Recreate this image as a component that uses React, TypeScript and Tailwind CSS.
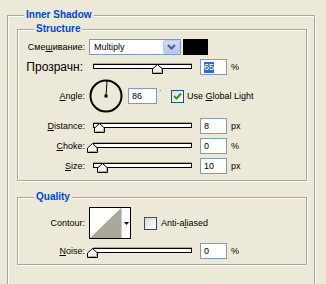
import type { ReactNode } from 'react';

// etched XP group box line: gray outer, white highlight
const ETCH = 'border border-[#aca899] shadow-[inset_1px_1px_0_#fff,1px_1px_0_#fff]';

function Legend({ children }: { children: ReactNode }) {
  return (
    <span className="absolute -top-[7px] left-[16px] px-[2px] bg-[#ece9d8] text-[10px] leading-[12px] font-bold text-[#0046d5]">
      {children}
    </span>
  );
}

function Thumb({ left }: { left: number }) {
  return (
    <svg className="absolute top-[5px]" style={{ left }} width="11" height="10" viewBox="0 0 11 10">
      <path d="M5.5 0.5 L10.5 5 V9.5 H0.5 V5 Z" fill="#f3f2ec" stroke="#000" />
      <path d="M1.5 5.4 L5.5 1.8" stroke="#fff" fill="none" />
      <path d="M1.5 8.5 H9.5 V5.4" stroke="#aca899" fill="none" />
    </svg>
  );
}

function Slider({ pos }: { pos: number }) {
  // pos: px from the track's left end to the thumb tip
  return (
    <div className="relative w-[107px] h-[16px] shrink-0 mr-[4px]">
      <div className="ml-[4px] mt-[5px] w-[99px] h-[5px] border border-black bg-white shadow-[0_-1px_0_#aca899]" />
      <Thumb left={4 + pos - 5.5} />
    </div>
  );
}

function Field({ value, w = 'w-[27px]', selected }: { value: string; w?: string; selected?: boolean }) {
  return (
    <div className={`${w} h-[16px] shrink-0 border border-[#7f9db9] bg-white pl-[3px] flex items-center`}>
      {selected ? <span className="bg-[#316ac5] text-white leading-[11px]">{value}</span> : <span>{value}</span>}
    </div>
  );
}

function Check({ checked }: { checked?: boolean }) {
  return (
    <div className="w-[13px] h-[13px] shrink-0 border border-[#1c5180] bg-gradient-to-br from-[#dcdcd7] to-white flex items-center justify-center">
      {checked && (
        <svg width="9" height="9" viewBox="0 0 9 9">
          <path d="M1 4 L3.5 6.5 L8 1.5" stroke="#21a121" strokeWidth="2" fill="none" />
        </svg>
      )}
    </div>
  );
}

function Label({ children }: { children: ReactNode }) {
  return <div className="w-[67px] shrink-0 mr-[4px] text-right">{children}</div>;
}

function SliderRow({ label, pos, value, unit, mt }: { label: ReactNode; pos: number; value: string; unit: string; mt: string }) {
  return (
    <div className={`flex items-center h-[16px] ${mt}`}>
      <Label>{label}</Label>
      <Slider pos={pos} />
      <Field value={value} />
      <span className="ml-[4px]">{unit}</span>
    </div>
  );
}

function Dial() {
  const a = (86 * Math.PI) / 180;
  return (
    <svg width="34" height="34" viewBox="0 0 34 34" className="shrink-0">
      <circle cx="17" cy="17" r="15.5" fill="none" stroke="#000" strokeWidth="2" />
      <line x1="17" y1="17" x2={17 + 15 * Math.cos(a)} y2={17 - 15 * Math.sin(a)} stroke="#000" strokeWidth="1" />
      <rect x="15.5" y="15.5" width="3" height="3" fill="#000" />
    </svg>
  );
}

function ContourSwatch() {
  return (
    <div className="flex w-[42px] h-[32px] shrink-0 border border-black bg-white">
      <svg width="31" height="30" viewBox="0 0 31 30">
        <polygon points="0,30 31,0 31,30" fill="#aca899" />
      </svg>
      <div className="flex-1 flex items-center justify-center border-l border-[#d4d0c8]">
        <svg width="5" height="3" viewBox="0 0 5 3">
          <polygon points="0,0 5,0 2.5,3" fill="#000" />
        </svg>
      </div>
    </div>
  );
}

export default function App() {
  return (
    <div className="w-[326px] h-[284px] overflow-hidden bg-[#ece9d8] text-[9px] leading-[11px] text-black font-['Liberation_Sans',Arial,sans-serif]">
      <div className="pt-[15px] pl-[7px]">
        <div className={`relative w-[308px] h-[300px] ${ETCH}`}>
          <Legend>Inner Shadow</Legend>

          {/* Structure */}
          <div className={`relative ml-[9px] mt-[13px] w-[290px] h-[152px] ${ETCH}`}>
            <Legend>Structure</Legend>
            <div className="flex items-center h-[16px] mt-[9px]">
              <Label>
                <span>
                  Сме<span className="underline">ш</span>ивание:
                </span>
              </Label>
              <div className="w-[92px] h-[16px] border border-[#7f9db9] bg-white flex items-center">
                <span className="flex-1 pl-[4px]">Multiply</span>
                <div className="w-[17px] h-[14px] rounded-[2px] border border-[#b9cbf3] bg-gradient-to-b from-[#cfdcfc] to-[#b2c6f5] flex items-center justify-center">
                  <svg width="9" height="6" viewBox="0 0 9 6">
                    <path d="M1 1 L4.5 4.5 L8 1" stroke="#4d6185" strokeWidth="2" fill="none" />
                  </svg>
                </div>
              </div>
              <div className="ml-[2px] w-[25px] h-[16px] bg-black" />
            </div>

            <div className="flex items-center h-[16px] mt-[4px]">
              <div className="w-[67px] shrink-0 mr-[4px] text-right text-[12px] leading-[14px] pr-[2px]">Прозрачн:</div>
              <Slider pos={64} />
              <Field value="65" selected />
              <span className="ml-[4px]">%</span>
            </div>

            <div className="flex items-center h-[34px] mt-[4px]">
              <Label>
                <span>
                  <span className="underline">A</span>ngle:
                </span>
              </Label>
              <Dial />
              <div className="ml-[5px]">
                <Field value="86" w="w-[29px]" />
              </div>
              <span className="w-[14px] self-start mt-[8px] pl-[2px] text-[7px] leading-[7px]">·</span>
              <Check checked />
              <span className="ml-[3px]">
                Use <span className="underline">G</span>lobal Light
              </span>
            </div>

            <SliderRow
              mt="mt-[5px]"
              label={
                <span>
                  <span className="underline">D</span>istance:
                </span>
              }
              pos={6}
              value="8"
              unit="px"
            />
            <SliderRow
              mt="mt-[4px]"
              label={
                <span>
                  <span className="underline">C</span>hoke:
                </span>
              }
              pos={-0.5}
              value="0"
              unit="%"
            />
            <SliderRow
              mt="mt-[4px]"
              label={
                <span>
                  <span className="underline">S</span>ize:
                </span>
              }
              pos={9.5}
              value="10"
              unit="px"
            />
          </div>

          {/* Quality */}
          <div className={`relative ml-[9px] mt-[16px] w-[290px] h-[68px] ${ETCH}`}>
            <Legend>Quality</Legend>
            <div className="flex items-center h-[32px] mt-[9px]">
              <Label>Contour:</Label>
              <ContourSwatch />
              <div className="ml-[13px]">
                <Check />
              </div>
              <span className="ml-[4px]">
                Anti-a<span className="underline">l</span>iased
              </span>
            </div>
            <SliderRow
              mt="mt-[4px]"
              label={
                <span>
                  <span className="underline">N</span>oise:
                </span>
              }
              pos={-0.5}
              value="0"
              unit="%"
            />
          </div>
        </div>
      </div>
    </div>
  );
}
